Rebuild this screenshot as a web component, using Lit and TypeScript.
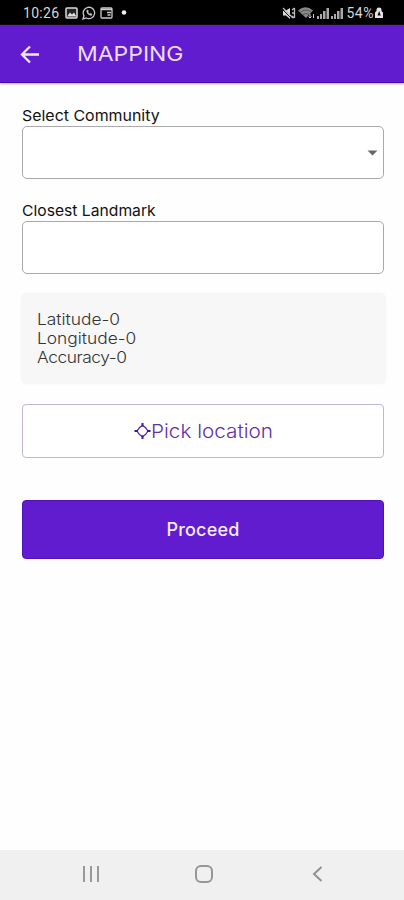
import { LitElement, html, css } from "lit";
import { customElement } from "lit/decorators.js";

@customElement("app-root")
export class AppRoot extends LitElement {
  static styles = css`
    :host {
      display: flex;
      flex-direction: column;
      width: 100%;
      height: 900px;
      box-sizing: border-box;
      background: #fefefe;
      font-family: Inter, "Open Sans", sans-serif;
      color: #111;
      overflow: hidden;
    }
    * { box-sizing: border-box; }
    svg { display: block; flex: none; }
    .status {
      height: 25px;
      flex: none;
      background: #000;
      color: #d6d6d6;
      display: flex;
      align-items: center;
      padding: 1px 20px 0 23px;
      font: 400 14px/24px Roboto, sans-serif;
    }
    .clock { width: 38px; letter-spacing: 0.3px; }
    .left { display: flex; align-items: center; gap: 4px; flex: 1; }
    .right { display: flex; align-items: center; }
    .battery { letter-spacing: 0.5px; margin: 0 0 0 3px; }
    .bar {
      height: 58px;
      flex: none;
      background: #611ccf;
      border-bottom: 1px solid #4d08b5;
      box-shadow: 0 1px 2px #bba8cc;
      display: flex;
      align-items: center;
      padding-left: 20px;
      color: #eddcff;
    }
    .wide {
      display: inline-block;
      transform-origin: left center;
      transform: scaleX(1.12);
      white-space: nowrap;
    }
    .title {
      margin: 1px 0 0 36.5px;
      font-size: 20.5px;
      line-height: 24px;
    }
    .form {
      flex: 1;
      display: flex;
      flex-direction: column;
      padding: 23px 20px 0 22px;
    }
    .label {
      height: 20px;
      font-size: 15px;
      line-height: 20px;
      align-self: flex-start;
    }
    .select-label { transform: scaleX(1.062); }
    .mark-label { transform: scaleX(1.045); }
    .field {
      height: 53px;
      border: 1px solid #aaa;
      border-radius: 5px;
      margin-bottom: 22px;
      background: #fff;
      display: flex;
      align-items: center;
      justify-content: flex-end;
      padding-right: 5px;
    }
    .card {
      height: 91px;
      margin: -3px -2px 0 -1px;
      border-radius: 6px;
      background: #f7f7f7;
      box-shadow: 0 0 2px #f4f4f4;
      padding: 17px 16px;
      font-size: 15.5px;
      line-height: 19px;
      font-weight: 300;
      color: #333;
      display: flex;
      flex-direction: column;
      align-items: flex-start;
    }
    .accuracy { letter-spacing: -0.4px; }
    .button {
      display: flex;
      align-items: center;
      justify-content: center;
      font-family: inherit;
      padding: 0;
      border-radius: 4px;
    }
    .pick {
      height: 54px;
      margin-top: 20px;
      background: #fff;
      border: 1px solid #c2b5d6;
      color: #6130ab;
      font-size: 18.5px;
      font-weight: 300;
      padding-bottom: 1px;
    }
    .pick .wide { margin-right: 12px; }
    .proceed {
      height: 59px;
      margin-top: 42px;
      background: #611ccf;
      border: 1px solid #5210bb;
      color: #f5eaff;
      font-size: 18px;
      font-weight: 500;
      letter-spacing: 0.2px;
    }
    .nav {
      height: 50px;
      flex: none;
      background: #f0f0f0;
      display: flex;
      align-items: center;
      justify-content: space-between;
      padding: 0 77px 2px 79px;
    }
    .home { margin-right: 7px; }
  `;

  private signal() {
    return html`<svg width="14" height="12" viewBox="0 0 14 12" fill="#aaa">
      <path d="M1 9h2v3H1zM4 7h2v5H4zM7 4h2.500v8H7zM10.500 1H13v11h-2.500z" />
    </svg>`;
  }

  render() {
    return html`
      <div class="status">
        <div class="left">
          <span class="clock">10:26</span>
          <svg width="13" height="12" viewBox="0 0 13 12">
            <rect x="1" y="1" width="11" height="10" rx="1" fill="#222" stroke="#ddd" stroke-width="1.500" />
            <path d="M2 9.500 5 5.500l2 2 2-2 2.500 4z" fill="#ddd" />
          </svg>
          <svg width="14" height="14" viewBox="0 0 14 14" fill="none" stroke="#ccc">
            <path d="M1 13l1-3.200A5.700 5.700 0 1 1 4.300 12z" stroke-width="1.300" />
            <path d="M4.800 4.200c-.5 3 2.200 5.400 4.800 5.200l.3-1.400-1.500-.7-.8.700-1.800-1.900.6-.8-.5-1.300z" fill="#ccc" stroke-width=".4" />
          </svg>
          <svg width="13" height="12" viewBox="0 0 13 12" fill="none" stroke="#ccc">
            <rect x="1" y="1" width="11" height="10" rx="1" stroke-width="1.300" />
            <path d="M1 2.500h11M7 5.500h4M7.500 8h3" stroke-width="1.600" />
          </svg>
          <svg width="13" height="12" viewBox="0 0 13 12"><circle cx="7" cy="5.500" r="2.300" fill="#eee" /></svg>
        </div>
        <div class="right">
          <svg width="15" height="13" viewBox="0 0 15 13">
            <path d="M1 3.500h3L8 1v11L4 8.500H1z" fill="#ddd" />
            <path d="M1 1l10 10M10 3l2.500-2M10 6h2.500M10 9l2 2M12.500 1v10" fill="none" stroke="#bbb" stroke-width="1.300" />
            <path d="M1 3l8 8" stroke="#000" stroke-width=".9" />
          </svg>
          <svg width="19" height="14" viewBox="0 0 19 14">
            <path d="M1 4.500Q8.500 -2 16 4.500L9 12z" fill="#888" />
            <path d="M3.500 6Q9 2 14.500 6M6 8.500Q9 6.500 12 8.500" fill="none" stroke="#444" stroke-width=".7" />
            <path d="M13 8v4m-1.500-1.500L13 12l1.500-1.500M16.500 12V8" fill="none" stroke="#ccc" />
          </svg>
          ${this.signal()}${this.signal()}
          <span class="battery">54%</span>
          <svg width="10" height="12" viewBox="0 0 9 12">
            <path d="M2 4V2.500A2.500 2 0 0 1 7 2.500V4l1.500 1.500V11h-8V5.500z" fill="#e4e4e4" />
            <path d="M3 8.500h3.300L4.600 4z" fill="#111" />
          </svg>
        </div>
      </div>
      <header class="bar">
        <svg width="20" height="20" viewBox="0 0 20 20" fill="none" stroke="#f2e8ff" stroke-width="2.300">
          <path d="M19 10.500H2.500M10 2.500 2 10.500l8 8" />
        </svg>
        <span class="title wide">MAPPING</span>
      </header>
      <main class="form">
        <div class="wide label select-label">Select Community</div>
        <div class="field">
          <svg width="11" height="6" viewBox="0 0 11 6"><path d="M.5.5h10l-5 5z" fill="#686868" /></svg>
        </div>
        <div class="wide label mark-label">Closest Landmark</div>
        <div class="field"></div>
        <section class="card">
          <div class="wide">Latitude-0</div>
          <div class="wide">Longitude-0</div>
          <div class="wide accuracy">Accuracy-0</div>
        </section>
        <button class="button pick">
          <svg width="17" height="18" viewBox="0 0 17 18">
            <path d="M8.500 3.300Q12 5 14 9 12 13 8.500 14.700 5 13 3 9 5 5 8.500 3.300z" fill="none" stroke="#5a2aa8" stroke-width="1.300" />
            <path d="M8.500 1v3.500M8.500 13.500V17M.5 9H4M13 9h3.500" stroke="#43119a" stroke-width="2" />
          </svg>
          <span class="wide">Pick location</span>
        </button>
        <button class="button proceed">Proceed</button>
      </main>
      <nav class="nav">
        <svg width="24" height="18" viewBox="0 0 24 18" stroke="#999" stroke-width="2">
          <path d="M5 1v16M12 1v16M19 1v16" />
        </svg>
        <svg class="home" width="20" height="20" viewBox="0 0 20 20" fill="none" stroke="#969696" stroke-width="2">
          <rect x="2" y="2" width="16" height="16" rx="5" />
        </svg>
        <svg width="16" height="18" viewBox="0 0 16 18" fill="none" stroke="#929292" stroke-width="2">
          <path d="M10.500 2 3 9l7.500 7" />
        </svg>
      </nav>
    `;
  }
}
